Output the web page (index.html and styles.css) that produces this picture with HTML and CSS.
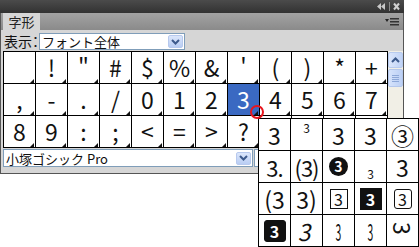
FILE: index.html
```html
<!DOCTYPE html>
<html lang="ja">
<head>
    <meta charset="UTF-8">
    <title>字形</title>
    <link rel="stylesheet" href="styles.css">
</head>
<body>
    <div class="panel">
        <div class="titlebar">
            <svg class="tb-ctrl" width="24" height="9" viewBox="0 0 24 9">
                <path d="M0 4.5 L4 1 L4 8 Z M4 4.5 L8 1 L8 8 Z" fill="#c8c8c8"/>
                <rect x="12" y="0" width="1" height="9" fill="#888"/>
                <path d="M17 1.5 L22 7.5 M22 1.5 L17 7.5" stroke="#d0d0d0" stroke-width="2"/>
            </svg>
        </div>
        <div class="tabrow">
            <div class="tab">字形</div>
            <svg class="menu" width="14" height="9" viewBox="0 0 14 9">
                <path d="M0 2 L4 2 L2 5 Z" fill="#222"/>
                <rect x="5" y="1" width="9" height="1.5" fill="#333"/>
                <rect x="5" y="4" width="9" height="1.5" fill="#333"/>
                <rect x="5" y="7" width="9" height="1.5" fill="#333"/>
            </svg>
        </div>
        <div class="body">
            <div class="show-row">
                <span class="label">表示：</span>
                <div class="select show-select">
                    <span class="value">フォント全体</span>
                    <span class="drop">
                        <svg width="9" height="6" viewBox="0 0 9 6"><path d="M1 1 L4.5 4.5 L8 1" stroke="#3d5a8c" stroke-width="2" fill="none"/></svg>
                    </span>
                </div>
            </div>
            <div class="grid-wrap">
                <div class="glyphs">
                    <div class="cell"></div>
                    <div class="cell">!</div>
                    <div class="cell">"</div>
                    <div class="cell">#</div>
                    <div class="cell">$</div>
                    <div class="cell">%</div>
                    <div class="cell">&amp;</div>
                    <div class="cell">'</div>
                    <div class="cell">(</div>
                    <div class="cell">)</div>
                    <div class="cell">*</div>
                    <div class="cell">+</div>
                    <div class="cell">,</div>
                    <div class="cell">-</div>
                    <div class="cell">.</div>
                    <div class="cell">/</div>
                    <div class="cell">0</div>
                    <div class="cell">1</div>
                    <div class="cell">2</div>
                    <div class="cell selected">3</div>
                    <div class="cell">4</div>
                    <div class="cell">5</div>
                    <div class="cell">6</div>
                    <div class="cell">7</div>
                    <div class="cell">8</div>
                    <div class="cell">9</div>
                    <div class="cell">:</div>
                    <div class="cell">;</div>
                    <div class="cell">&lt;</div>
                    <div class="cell">=</div>
                    <div class="cell">&gt;</div>
                    <div class="cell">?</div>
                    <div class="cell">@</div>
                    <div class="cell">A</div>
                    <div class="cell">B</div>
                    <div class="cell">C</div>
                </div>
                <div class="scrollbar">
                    <div class="sb-btn">
                        <svg width="9" height="6" viewBox="0 0 9 6"><path d="M1 5 L4.5 1.5 L8 5" stroke="#3d5a8c" stroke-width="2" fill="none"/></svg>
                    </div>
                    <div class="sb-thumb">
                        <i></i><i></i><i></i><i></i>
                    </div>
                </div>
            </div>
            <div class="font-row">
                <div class="select font-select">
                    <span class="value">小塚ゴシック Pro</span>
                    <span class="drop">
                        <svg width="9" height="6" viewBox="0 0 9 6"><path d="M1 1 L4.5 4.5 L8 1" stroke="#3d5a8c" stroke-width="2" fill="none"/></svg>
                    </span>
                </div>
                <div class="select style-select"></div>
            </div>
        </div>
    </div>

    <div class="popup">
        <div class="pcell">3</div>
        <div class="pcell sup">3</div>
        <div class="pcell">3</div>
        <div class="pcell">3</div>
        <div class="pcell">③</div>
        <div class="pcell tight">3.</div>
        <div class="pcell tight">(3)</div>
        <div class="pcell"><span class="dot">3</span></div>
        <div class="pcell sub">3</div>
        <div class="pcell">3</div>
        <div class="pcell">(3</div>
        <div class="pcell">3)</div>
        <div class="pcell"><span class="box">3</span></div>
        <div class="pcell"><span class="box inv">3</span></div>
        <div class="pcell"><span class="box round">3</span></div>
        <div class="pcell"><span class="box round inv">3</span></div>
        <div class="pcell"><span class="slant">3</span></div>
        <div class="pcell"><span class="narrow">3</span></div>
        <div class="pcell"><span class="narrow">3</span></div>
        <div class="pcell top"><span class="turned">3</span></div>
    </div>
    <div class="marker"></div>
</body>
</html>
```

FILE: styles.css
```css
body {
    margin: 0;
    background: white;
    font-family: "Noto Sans CJK JP", "Noto Sans", sans-serif;
    width: 419px;
    height: 247px;
    overflow: hidden;
    position: relative;
}
.panel {
    width: 404px;
}
.titlebar {
    height: 13px;
    background: linear-gradient(#4b4b4b, #323232);
    display: flex;
    justify-content: flex-end;
    align-items: center;
    padding-right: 3px;
}
.tb-ctrl {
    display: block;
}
.tabrow {
    height: 17px;
    background: linear-gradient(#a3a3a3, #8a8a8a);
    border-left: 1px solid #555;
    border-right: 1px solid #555;
    display: flex;
    align-items: flex-end;
    justify-content: space-between;
    padding: 0 4px 0 2px;
}
.tab {
    height: 17px;
    width: 37px;
    background: #d6d6d6;
    font-size: 13px;
    line-height: 17px;
    color: #222;
    text-align: center;
    white-space: nowrap;
}
.menu {
    align-self: center;
    display: block;
}
.body {
    background: #d6d6d6;
    border: 1px solid #555;
    border-top: none;
    padding: 3px 0 6px 2px;
}
.show-row {
    display: flex;
    align-items: center;
    height: 17px;
}
.label {
    font-size: 14px;
    line-height: 17px;
    color: #111;
    width: 35px;
    padding-left: 1px;
    white-space: nowrap;
    font-feature-settings: "palt" 1;
}
.select {
    background: white;
    border: 1px solid #7f9db9;
    height: 17px;
    box-sizing: border-box;
    display: flex;
    align-items: center;
    justify-content: space-between;
    font-size: 13px;
    color: #111;
}
.select .value {
    padding-left: 2px;
    line-height: 15px;
    white-space: nowrap;
}
.drop {
    width: 15px;
    height: 13px;
    margin-right: 1px;
    background: linear-gradient(#dbe6fb, #b9cdf3);
    border: 1px solid #b7c9ee;
    border-radius: 2px;
    box-sizing: border-box;
    display: flex;
    align-items: center;
    justify-content: center;
}
.drop svg, .sb-btn svg {
    display: block;
}
.show-select {
    width: 146px;
}
.grid-wrap {
    display: flex;
    margin-top: 1px;
}
.glyphs {
    display: grid;
    grid-template-columns: repeat(12, 31px);
    grid-auto-rows: 31px;
    gap: 1px;
    padding: 1px;
    background: #000;
}
.cell {
    background: white;
    position: relative;
    font-size: 23px;
    line-height: 31px;
    text-align: center;
    color: #111;
}
.cell::after {
    content: "";
    position: absolute;
    right: 1px;
    bottom: 0;
    border-left: 4px solid transparent;
    border-bottom: 4px solid #111;
}
.cell.selected {
    background: #3a69c2;
    color: white;
}
.scrollbar {
    width: 15px;
    background: #f1efe6;
    padding-top: 1px;
}
.sb-btn {
    height: 16px;
    background: linear-gradient(90deg, #dce7fc, #c0d3f6);
    border: 1px solid #b8cbef;
    border-radius: 2px;
    box-sizing: border-box;
    display: flex;
    align-items: center;
    justify-content: center;
}
.sb-thumb {
    height: 18px;
    margin-top: 1px;
    background: linear-gradient(90deg, #d6e3fb, #bcd0f5);
    border: 1px solid #b4c7ec;
    border-radius: 2px;
    box-sizing: border-box;
    display: flex;
    flex-direction: column;
    align-items: center;
    justify-content: center;
    gap: 1px;
}
.sb-thumb i {
    display: block;
    width: 7px;
    height: 1px;
    background: #8ea8d8;
}
.font-row {
    display: flex;
    gap: 1px;
    margin-top: 1px;
    height: 18px;
}
.font-row .select {
    height: 18px;
}
.font-select {
    width: 250px;
}
.style-select {
    width: 100px;
}
.popup {
    position: absolute;
    left: 258px;
    top: 118px;
    display: grid;
    grid-template-columns: repeat(5, 31px);
    grid-auto-rows: 31px;
    gap: 1px;
    padding: 1px;
    background: #000;
}
.pcell {
    background: white;
    font-size: 23px;
    line-height: 28px;
    color: #111;
    overflow: hidden;
    display: flex;
    align-items: center;
    justify-content: center;
    white-space: nowrap;
}
.pcell.sup {
    font-size: 12px;
    line-height: 14px;
    align-items: flex-start;
    padding-top: 2px;
}
.pcell.sub {
    font-size: 12px;
    line-height: 14px;
    align-items: flex-end;
    padding-bottom: 1px;
}
.pcell.tight {
    letter-spacing: -1px;
    font-size: 22px;
}
.pcell.top {
    align-items: flex-start;
}
.dot {
    width: 19px;
    height: 19px;
    border-radius: 50%;
    background: #111;
    color: white;
    font-size: 14px;
    font-weight: bold;
    line-height: 19px;
    text-align: center;
}
.box {
    display: block;
    width: 16px;
    height: 18px;
    border: 1px solid #111;
    font-size: 16px;
    line-height: 18px;
    text-align: center;
}
.box.inv {
    width: 20px;
    height: 20px;
    background: #111;
    color: white;
    font-weight: bold;
    line-height: 20px;
}
.box.round {
    border-radius: 3px;
}
.slant {
    display: block;
    transform: skewX(-12deg);
}
.narrow {
    display: block;
    transform: scaleX(0.45);
}
.turned {
    display: block;
    font-size: 23px;
    line-height: 23px;
    transform: rotate(90deg);
    margin-top: 2px;
}
.marker {
    position: absolute;
    left: 250px;
    top: 105px;
    width: 10px;
    height: 10px;
    border: 2px solid #e8141c;
    border-radius: 50%;
}
```
